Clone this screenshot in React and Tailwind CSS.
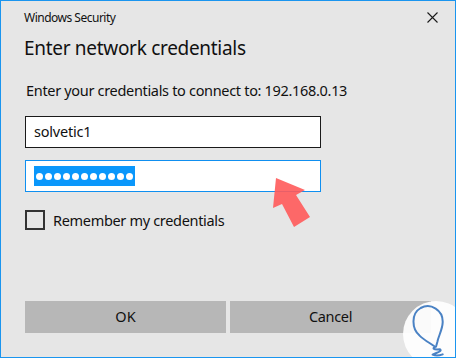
export default function App() {
  const font = { fontFamily: '"Noto Sans", "Open Sans", sans-serif' };
  return (
    <div
      className="relative w-[456px] h-[358px] overflow-hidden border border-[#1a95ef] bg-[#e6e6e6] text-[#111111] flex flex-col"
      style={font}
    >
      {/* title bar */}
      <div className="flex items-center justify-between h-[33px] pl-[23px] pr-[17px]">
        <span className="text-[12px] leading-[16px] tracking-[-0.5px] text-[#111111]">Windows Security</span>
        <svg width="11" height="11" viewBox="0 0 11 11" className="text-[#1a1a1a]">
          <path d="M0.5 0.5 L10.5 10.5 M10.5 0.5 L0.5 10.5" stroke="currentColor" strokeWidth="1.1" />
        </svg>
      </div>

      <div className="pl-[23px]">
        <div className="text-[19px] leading-[28px] tracking-[-0.3px] text-[#111111]">Enter network credentials</div>
        <div className="mt-[18px] pl-[2px] text-[14.5px] leading-[20px] tracking-[-0.32px]">
          Enter your credentials to connect to: 192.168.0.13
        </div>

        <div className="mt-[16px] ml-[1px] w-[296px] h-[32px] border border-[#1a1a1a] bg-white flex items-center pl-[8px] text-[14.5px] tracking-[-0.2px]">
          solvetic1
        </div>

        <div className="mt-[12px] ml-[1px] w-[296px] h-[32px] border border-[#0f8ff0] bg-white flex items-center pl-[8px]">
          <span className="h-[20px] w-[101px] bg-[#0a97fb] flex items-center gap-[2px] pl-[2px]">
            {Array.from({ length: 11 }).map((_, i) => (
              <span key={i} className="w-[7px] h-[7px] rounded-full bg-white" />
            ))}
          </span>
        </div>

        <div className="mt-[18px] ml-[1px] flex items-center gap-[8px]">
          <span className="w-[20px] h-[20px] border-2 border-[#333333] bg-transparent" />
          <span className="text-[14.5px] leading-[20px] tracking-[-0.32px]">Remember my credentials</span>
        </div>
      </div>

      <div className="mt-auto flex gap-[4px] pl-[24px] pb-[24px]">
        <div className="w-[201px] h-[32px] bg-[#b7b7b7] flex items-center justify-center text-[14.5px]">OK</div>
        <div className="w-[201px] h-[32px] bg-[#b7b7b7] flex items-center justify-center text-[14.5px] tracking-[-0.32px]">Cancel</div>
      </div>

      {/* gap in left border */}
      <div className="absolute left-[-1px] top-[260px] w-[1px] h-[37px] bg-[#e6e6e6]" />

      {/* red arrow */}
      <svg className="absolute left-[-1px] top-[-1px]" width="456" height="358" viewBox="0 0 456 358">
        <polygon
          points="276,178 305,190 296,195 310,217 294,227 282,204 273,208"
          fill="#ff5a5a"
          fillOpacity="0.9"
        />
      </svg>

      {/* watermark logo */}
      <svg className="absolute left-[399px] top-[295px]" width="56" height="62" viewBox="0 0 168 186">
        <circle cx="108" cy="114" r="99" fill="#ffffff" fillOpacity="0.92" />
        <path
          d="M102 150 C 88 140 72 132 58 118 C 34 96 34 52 62 36 C 92 20 130 42 128 80 C 127 102 116 118 112 138 L 108 152 C 96 156 98 162 120 160 C 128 166 108 170 98 176 C 110 181 120 178 128 175"
          fill="none"
          stroke="#4a82c4"
          strokeWidth="6"
          strokeLinecap="round"
          strokeLinejoin="round"
        />
      </svg>
    </div>
  );
}
